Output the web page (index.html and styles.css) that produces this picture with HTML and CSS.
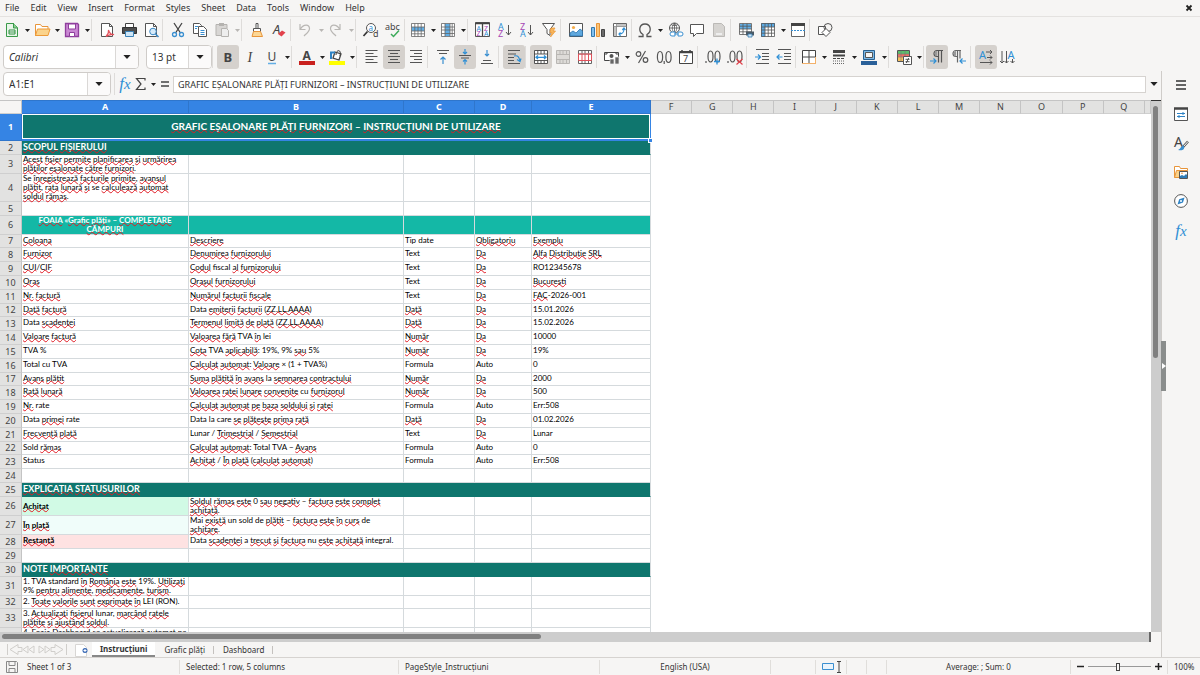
FILE: index.html
```html
<!DOCTYPE html>
<html lang="ro">
<head>
<meta charset="utf-8">
<title>Grafic eșalonare plăți furnizori</title>
<link rel="stylesheet" href="styles.css">
</head>
<body>
<svg class="defs" width="0" height="0" aria-hidden="true">
  <symbol id="caret" viewBox="0 0 8 22"><path d="M2 10h5l-2.500 3z" fill="currentColor"/></symbol>
  <symbol id="page" viewBox="0 0 22 22"><path d="M5.500 4.500h8l3 3v10h-11z" fill="#fff" stroke="#555"/><path d="M13.500 4.500v3h3" fill="none" stroke="#555"/></symbol>
</svg>

<nav class="menubar">
  <button>File</button><button>Edit</button><button>View</button><button>Insert</button><button>Format</button><button>Styles</button><button>Sheet</button><button>Data</button><button>Tools</button><button>Window</button><button>Help</button>
  <button class="close" aria-label="Close"><svg width="8" height="8" viewBox="0 0 8 8"><path d="M1.500 1.500l5 5m0-5l-5 5" stroke="#222" stroke-width="1.800"/></svg></button>
</nav>

<div class="toolbar">
  <button class="tool" aria-label="New"><svg viewBox="0 0 22 22"><path d="M5.500 4.500h7l4 4v9h-11z" fill="#e8f5e9" stroke="#3a9a49"/><path d="M12.500 4v5h4" fill="#8bcf93" stroke="#3a9a49"/><path d="M8 11h6v4H8zM8 13h6" fill="#fff" stroke="#2f9141"/></svg></button>
  <button class="drop" aria-label="New options"><svg><use href="#caret"/></svg></button>
  <button class="tool" aria-label="Open"><svg viewBox="0 0 22 22"><path d="M4.500 17V5.500h5l1.500 2h6V10" fill="#fff" stroke="#e8953a"/><path d="M4.500 16.500l2-6.500h12.500l-2 6.500z" fill="#fbd38b" stroke="#ed9a38"/></svg></button>
  <button class="drop" aria-label="Recent files"><svg><use href="#caret"/></svg></button>
  <button class="tool" aria-label="Save"><svg viewBox="0 0 22 22"><path d="M4.500 4.500h12l1 1v12h-13z" fill="#c987d3" stroke="#8f3f9d" stroke-width="1.300"/><path d="M7.500 5h7v5h-7z" fill="#fff" stroke="#8f3f9d"/><path d="M8.500 13.500h5v4h-5z" fill="#fff" stroke="#8f3f9d"/></svg></button>
  <button class="drop" aria-label="Save options"><svg><use href="#caret"/></svg></button>
  <span class="sep"></span>
  <button class="tool" aria-label="Export as PDF"><svg viewBox="0 0 22 22"><use href="#page"/><path d="M10 17.500c2-2 3-4 2.500-6.500 1 3.500 3 5 5.500 4.500-3-.5-5 .5-8 2z" fill="none" stroke="#e2525c" stroke-width="1.200"/></svg></button>
  <button class="tool" aria-label="Print"><svg viewBox="0 0 22 22"><path d="M7.500 4.500h8v4h-8z" fill="#fff" stroke="#444"/><path d="M4.500 8.500h14v6h-14z" fill="#4d4d4d" stroke="#333"/><path d="M7.500 12.500h8v5h-8z" fill="#cfe6f7" stroke="#3c83b8"/></svg></button>
  <button class="tool" aria-label="Print preview"><svg viewBox="0 0 22 22"><use href="#page"/><circle cx="13" cy="12.500" r="3.300" fill="#d7ebfa" stroke="#3a87c4"/><path d="M15.500 15l3 3" stroke="#3a87c4" stroke-width="1.600"/></svg></button>
  <span class="sep"></span>
  <button class="tool" aria-label="Cut"><svg viewBox="0 0 22 22"><path d="M7 4l6.500 10M15 4L8.500 14" stroke="#444" stroke-width="1.300"/><circle cx="7.500" cy="15.500" r="2" fill="none" stroke="#3a8fd0" stroke-width="1.300"/><circle cx="14.500" cy="15.500" r="2" fill="none" stroke="#3a8fd0" stroke-width="1.300"/></svg></button>
  <button class="tool" aria-label="Copy"><svg viewBox="0 0 22 22"><path d="M4.500 4.500h6l2 2v8h-8z" fill="#fff" stroke="#555"/><path d="M9.500 7.500h5l3 3v7h-8z" fill="#fff" stroke="#555"/><path d="M6 7.500h3M6 9.500h2M11.500 11.500h4M11.500 13.500h4M11.500 15.500h4" stroke="#3a8fd0"/></svg></button>
  <button class="tool off" aria-label="Paste"><svg viewBox="0 0 22 22"><path d="M5 5.500h11v11H5z" fill="#d8d6d4" stroke="#b5b3b0"/><path d="M8 4h5v3H8z" fill="#b5b3b0"/><path d="M10.500 9.500h5l2 2v6h-7z" fill="#eee" stroke="#b5b3b0"/></svg></button>
  <button class="drop off" aria-label="Paste options"><svg><use href="#caret"/></svg></button>
  <span class="sep"></span>
  <button class="tool" aria-label="Clone formatting"><svg viewBox="0 0 22 22"><path d="M10 4.500h2v5h-2zM7.500 9.500h7v3h-7z" fill="#fff" stroke="#555"/><path d="M7.500 12.500h7l2 5H6z" fill="#fcd795" stroke="#e8953a"/></svg></button>
  <button class="tool" aria-label="Clear formatting"><svg viewBox="0 0 22 22"><text x="5" y="15" class="glyph italic" font-size="13">A</text><path d="M10 15l4-3.500 3.500 2-4 4z" fill="#e2414b"/></svg></button>
  <span class="sep"></span>
  <button class="tool off" aria-label="Undo"><svg viewBox="0 0 22 22"><path d="M5 5v5.500h5.500M5.500 10c3-5 9-5 9-.5 0 3-3 5-5.500 7.500" fill="none" stroke="#b9b7b4" stroke-width="1.200"/></svg></button>
  <button class="drop off" aria-label="Undo steps"><svg><use href="#caret"/></svg></button>
  <button class="tool off" aria-label="Redo"><svg viewBox="0 0 22 22"><path d="M15 5v5.500H9.500M14.500 10c-3-5-9-5-9-.5 0 3 3 5 5.500 7.500" fill="none" stroke="#b9b7b4" stroke-width="1.200"/></svg></button>
  <button class="drop off" aria-label="Redo steps"><svg><use href="#caret"/></svg></button>
  <span class="sep"></span>
  <button class="tool" aria-label="Find and replace"><svg viewBox="0 0 22 22"><circle cx="11" cy="9" r="4.500" fill="#fff" stroke="#555"/><path d="M7.500 12.500L3.500 17" stroke="#333" stroke-width="1.700"/><text x="8.500" y="11.500" class="glyph blue" font-size="8">a</text><text x="13" y="18" class="glyph" font-size="9">d</text></svg></button>
  <button class="tool" aria-label="Spelling"><svg viewBox="0 0 22 22"><text x="3" y="11" class="glyph" font-size="9">abc</text><path d="M9 15l2.500 2.500 5.500-6" fill="none" stroke="#3dab5a" stroke-width="1.500"/></svg></button>
  <span class="sep tight"></span>
  <button class="tool" aria-label="Row"><svg viewBox="0 0 22 22"><path d="M4.500 4.500h13v13h-13z" fill="#fff"/><path d="M5 8h12v4H5z" fill="#62aee5"/><path d="M4.500 4.500h13v13h-13zM4.500 8h13M4.500 12h13M4.500 14.800h13M7.800 4.500v13M11 4.500v13M14.200 4.500v13" fill="none" stroke="#666" stroke-width=".8"/></svg></button>
  <button class="drop" aria-label="Row options"><svg><use href="#caret"/></svg></button>
  <button class="tool" aria-label="Column"><svg viewBox="0 0 22 22"><path d="M4.500 4.500h13v13h-13z" fill="#fff"/><path d="M8 5h5v12H8z" fill="#62aee5"/><path d="M4.500 4.500h13v13h-13zM4.500 8h13M4.500 11h13M4.500 14.500h13M8 4.500v13M13 4.500v13M15.200 4.500v13" fill="none" stroke="#666" stroke-width=".8"/></svg></button>
  <button class="drop" aria-label="Column options"><svg><use href="#caret"/></svg></button>
  <span class="sep"></span>
  <button class="tool" aria-label="Sort"><svg viewBox="0 0 22 22"><path d="M3.500 3.500h14v14h-14z" fill="#fff" stroke="#555"/><path d="M3 4.500h15M10.500 5v12" stroke="#444" stroke-width="1.300"/><text x="4.500" y="11.500" class="glyph blue" font-size="7">A</text><text x="4.500" y="17" class="glyph purple" font-size="7">Z</text><text x="12" y="11.500" class="glyph purple" font-size="7">Z</text><text x="12" y="17" class="glyph blue" font-size="7">A</text></svg></button>
  <button class="tool" aria-label="Sort ascending"><svg viewBox="0 0 22 22"><text x="4" y="10.500" class="glyph blue" font-size="9">A</text><text x="4" y="18" class="glyph purple" font-size="9">Z</text><path d="M14.500 6v10M12 13l2.500 3 2.500-3" fill="none" stroke="#555"/></svg></button>
  <button class="tool" aria-label="Sort descending"><svg viewBox="0 0 22 22"><text x="4" y="10.500" class="glyph purple" font-size="9">Z</text><text x="4" y="18" class="glyph blue" font-size="9">A</text><path d="M14.500 6v10M12 13l2.500 3 2.500-3" fill="none" stroke="#555"/></svg></button>
  <button class="tool" aria-label="AutoFilter"><svg viewBox="0 0 22 22"><path d="M4.500 4.500h12l-4.500 6v6l-3-2v-4z" fill="#fff" stroke="#555"/><path d="M13 9h4l-2 3h2.500l-5 6 1.500-4.500h-2z" fill="#f8b65c" stroke="#ed9a38" stroke-width=".8"/></svg></button>
  <span class="sep"></span>
  <button class="tool" aria-label="Image"><svg viewBox="0 0 22 22"><path d="M4.500 4.500h13v13h-13z" fill="#fff" stroke="#555"/><circle cx="8.500" cy="8.500" r="1.600" fill="#f6ad49"/><path d="M5 17v-3l3-2 3 2 4-4 2.500 2v5z" fill="#5fa8de" stroke="#2a74b0" stroke-width=".8"/></svg></button>
  <button class="tool" aria-label="Chart"><svg viewBox="0 0 22 22"><path d="M4.500 8.500h3v9h-3z" fill="#82c0ee" stroke="#3278ae"/><path d="M9.500 4.500h3v13h-3z" fill="#fbc476" stroke="#e8953a"/><path d="M14.500 10.500h3v7h-3z" fill="#6a6a6a" stroke="#444"/></svg></button>
  <button class="tool" aria-label="Pivot table"><svg viewBox="0 0 22 22"><path d="M4.500 4.500h13v13h-13z" fill="#fff" stroke="#666"/><path d="M8 5h9v2.500H8zM5 8h2.500v9H5z" fill="#c4c4c4"/><path d="M4.500 7.500h13M7.500 4.500v13" stroke="#888" stroke-width=".8"/><path d="M10 15c4 0 5-1.500 5-5.500M13.300 11L15 9l1.500 2M11.500 13.500L10 15l1.500 1.800" fill="none" stroke="#2f8fd5" stroke-width="1.200"/></svg></button>
  <span class="sep tight"></span>
  <button class="tool" aria-label="Special character"><svg viewBox="0 0 22 22"><path d="M4.500 17.500h4.500v-2c-5-3-4-10.500 2-10.500s7 7.500 2 10.500v2h4.500" fill="none" stroke="#555" stroke-width="1.300"/></svg></button>
  <button class="drop" aria-label="Recent characters"><svg><use href="#caret"/></svg></button>
  <button class="tool" aria-label="Hyperlink"><svg viewBox="0 0 22 22"><circle cx="10.500" cy="9" r="5" fill="#fff" stroke="#555"/><path d="M5.500 9h10M10.500 4v10M7 5.500c2 1.500 5 1.500 7 0M10.500 4c-3 2.500-3 7.500 0 10M10.500 4c3 2.500 3 7.500 0 10" fill="none" stroke="#555" stroke-width=".8"/><path d="M8 13h3v4H8a2 2 0 010-4zm6 0h3a2 2 0 010 4h-3zM10.500 15h4" fill="#fff" stroke="#3a8fd0"/></svg></button>
  <button class="tool" aria-label="Comment"><svg viewBox="0 0 22 22"><path d="M4.500 5.500h13v9h-7l-3 3v-3h-3z" fill="#fff" stroke="#555"/></svg></button>
  <button class="tool off" aria-label="Headers and footers"><svg viewBox="0 0 22 22"><path d="M5.500 4.500h8l3 3v10h-11z" fill="#d6d4d1" stroke="#bbb9b6"/><path d="M8 14h6v2H8z" fill="#eee"/></svg></button>
  <span class="sep"></span>
  <button class="tool" aria-label="Print area"><svg viewBox="0 0 22 22"><path d="M4.500 4.500h12v11h-12z" fill="#fff"/><path d="M5 5h11v5H5z" fill="#62aee5"/><path d="M4.500 4.500h12v11h-12zM4.500 7.200h12M4.500 10h12M4.500 12.800h12M8 4.500v11M12 4.500v11" fill="none" stroke="#555" stroke-width=".8"/><path d="M11 12.500h8v4h-8z" fill="#4b5a66"/><path d="M13 15h4v3h-4z" fill="#cde5f6" stroke="#3278ae" stroke-width=".8"/></svg></button>
  <button class="tool" aria-label="Freeze panes"><svg viewBox="0 0 22 22"><path d="M4.500 4.500h13v13h-13z" fill="#fff"/><path d="M4 4h14v4H8v10H4z" fill="#5ba9e2"/><path d="M4.500 4.500h13v13h-13zM4.500 8h13M4.500 11h13M4.500 14.200h13M8 4.500v13M11.200 4.500v13M14.500 4.500v13" fill="none" stroke="#555" stroke-width=".8"/></svg></button>
  <button class="drop" aria-label="Freeze options"><svg><use href="#caret"/></svg></button>
  <button class="tool" aria-label="Split window"><svg viewBox="0 0 22 22"><path d="M4.500 4.500h13v13h-13z" fill="#fff" stroke="#666"/><path d="M4 5.500h14" stroke="#444" stroke-width="3"/><path d="M4 11.500h14" stroke="#3a8fd0" stroke-dasharray="2 1"/></svg></button>
  <span class="sep"></span>
  <button class="tool" aria-label="Show draw functions"><svg viewBox="0 0 22 22"><path d="M4.500 7.500h7v8h-7z" fill="#fff" stroke="#555"/><circle cx="14" cy="8.500" r="4" fill="none" stroke="#555"/><path d="M12 9.500l4 4-4 4-4-4z" fill="#fff" stroke="#555"/></svg></button>
</div>

<div class="toolbar formatting">
  <div class="combo name"><input type="text" value="Calibri" aria-label="Font name"><button aria-label="Font list"><svg viewBox="0 0 9 5"><path d="M0 0h9L4.500 5z"/></svg></button></div>
  <div class="combo size"><input type="text" value="13 pt" aria-label="Font size"><button aria-label="Size list"><svg viewBox="0 0 9 5"><path d="M0 0h9L4.500 5z"/></svg></button></div>
  <span class="sep"></span>
  <button class="tool on" aria-label="Bold"><svg viewBox="0 0 22 22"><text x="6.500" y="15.500" class="glyph bold" font-size="13">B</text></svg></button>
  <button class="tool" aria-label="Italic"><svg viewBox="0 0 22 22"><text x="8.500" y="15.500" class="glyph serif" font-size="14">I</text></svg></button>
  <button class="tool" aria-label="Underline"><svg viewBox="0 0 22 22"><text x="6.500" y="14.500" class="glyph" font-size="12">U</text><path d="M7 17.500h8" stroke="#62aee5" stroke-width="1.500"/></svg></button>
  <button class="drop" aria-label="Underline styles"><svg><use href="#caret"/></svg></button>
  <span class="sep"></span>
  <button class="tool" aria-label="Font color"><svg viewBox="0 0 22 22"><text x="6.500" y="13.500" class="glyph bold" font-size="12">A</text><path d="M3 15h16v4H3z" fill="#c9211e"/></svg></button>
  <button class="drop" aria-label="Font colors"><svg><use href="#caret"/></svg></button>
  <button class="tool" aria-label="Background color"><svg viewBox="0 0 22 22"><path d="M9 6l6 2-2 6-6-2z" fill="#fff" stroke="#444" stroke-width="1.300"/><path d="M10 9c0-6 6-6 4 1" fill="none" stroke="#444"/><path d="M5 13V6.500h4" fill="none" stroke="#2f83c5" stroke-width="2"/><path d="M3 15h16v4H3z" fill="#ff0"/></svg></button>
  <button class="drop" aria-label="Background colors"><svg><use href="#caret"/></svg></button>
  <span class="sep"></span>
  <button class="tool" aria-label="Align left"><svg viewBox="0 0 22 22"><path d="M4.500 4.500h12M4.500 7.500h8M4.500 10.500h12M4.500 13.500h8M4.500 16.500h12" stroke="#555"/></svg></button>
  <button class="tool on" aria-label="Center horizontally"><svg viewBox="0 0 22 22"><path d="M5 4.500h12M7 7.500h8M5 10.500h12M7 13.500h8M5 16.500h12" stroke="#555"/></svg></button>
  <button class="tool" aria-label="Align right"><svg viewBox="0 0 22 22"><path d="M5 4.500h12M9 7.500h8M5 10.500h12M9 13.500h8M5 16.500h12" stroke="#555"/></svg></button>
  <span class="sep"></span>
  <button class="tool" aria-label="Align top"><svg viewBox="0 0 22 22"><path d="M5 4.500h12M7 7.500h8" stroke="#555"/><path d="M11 18v-7M8.500 13.500L11 11l2.500 2.500" fill="none" stroke="#3a8fd0" stroke-width="1.200"/></svg></button>
  <button class="tool on" aria-label="Center vertically"><svg viewBox="0 0 22 22"><path d="M5 9.500h12M7 12h8" stroke="#555"/><path d="M11 3v5M9 6l2 2 2-2M11 18.500v-5M9 15.500l2-2 2 2" fill="none" stroke="#2f8fd5" stroke-width="1.200"/></svg></button>
  <button class="tool" aria-label="Align bottom"><svg viewBox="0 0 22 22"><path d="M5 17.500h12M7 14.500h8" stroke="#555"/><path d="M11 4v6M9 8l2 2 2-2" fill="none" stroke="#3a8fd0" stroke-width="1.200"/></svg></button>
  <span class="sep"></span>
  <button class="tool on" aria-label="Wrap text"><svg viewBox="0 0 22 22"><path d="M5 4.500h12M5 8h8M5 11.500h6M5 14.500h6M5 17.500h12" stroke="#555"/><path d="M11 10c4-1 5 1 6 5M14 13.500l3 2 1-3" fill="none" stroke="#2f8fd5" stroke-width="1.200"/></svg></button>
  <span class="sep"></span>
  <button class="tool on" aria-label="Merge and center cells"><svg viewBox="0 0 22 22"><path d="M4.500 4.500h13v13h-13z" fill="#fff"/><path d="M4.500 4.500h13v13h-13zM4.500 8h13M4.500 14.500h13M7.800 4.500v3.500M11 4.500v3.500M14.200 4.500v3.500M7.800 14.500v3M11 14.500v3M14.200 14.500v3" fill="none" stroke="#444" stroke-width=".9"/><path d="M6 11.300h10M8 9.500L6 11.300l2 1.700M14 9.500l2 1.800-2 1.700" fill="none" stroke="#2f8fd5" stroke-width="1.300"/></svg></button>
  <button class="tool off" aria-label="Merge cells"><svg viewBox="0 0 22 22"><path d="M4.500 4.500h13v13h-13zM4.500 8.500h13M4.500 13.500h13M8 4.500v4M11 4.500v4M14.500 4.500v4M8 13.500v4M11 13.500v4M14.500 13.500v4" fill="#dddbd8" stroke="#b9b7b4"/></svg></button>
  <button class="tool" aria-label="Unmerge cells"><svg viewBox="0 0 22 22"><path d="M4.500 4.500h13v13h-13zM4.500 8h13M4.500 14.500h13M8 4.500v3M11 4.500v3M14.500 4.500v3M8 15v3M11 15v3M14.500 15v3" fill="#fff" stroke="#555" stroke-width=".9"/><path d="M4.500 8h13v6.500h-13zM8 8v6.500M11 8v6.500M14.500 8v6.500" fill="none" stroke="#e2525c"/></svg></button>
  <span class="sep"></span>
  <button class="tool" aria-label="Currency"><svg viewBox="0 0 22 22"><path d="M9 14.500H3.500v-8h14v6" fill="#fff" stroke="#444"/><circle cx="10.500" cy="10" r="2" fill="#555"/><path d="M3 8h3V6M15 6v2h3" fill="none" stroke="#444"/><path d="M9 13h4v5H9zM14 11h4v7h-4z" fill="#666" stroke="#eee" stroke-width=".7"/></svg></button>
  <button class="drop" aria-label="Currency options"><svg><use href="#caret"/></svg></button>
  <button class="tool" aria-label="Percent"><svg viewBox="0 0 22 22"><circle cx="7.500" cy="8" r="2.300" fill="none" stroke="#555" stroke-width="1.200"/><circle cx="14.500" cy="14" r="2.300" fill="none" stroke="#555" stroke-width="1.200"/><path d="M14.500 5l-7 12" stroke="#555" stroke-width="1.200"/></svg></button>
  <button class="tool" aria-label="Number"><svg viewBox="0 0 22 22"><g fill="none" stroke="#555" stroke-width="1.200"><ellipse cx="7" cy="11" rx="2.600" ry="5.500"/><ellipse cx="15.500" cy="11" rx="2.600" ry="5.500"/><path d="M11.200 15v3"/></g></svg></button>
  <button class="tool" aria-label="Date"><svg viewBox="0 0 22 22"><path d="M4.500 5.500h13v12h-13z" fill="#fff" stroke="#444"/><path d="M4 6.500h14M7 4v3M15 4v3" stroke="#444" stroke-width="1.500"/><text x="8" y="16" class="glyph" font-size="9">7</text></svg></button>
  <span class="sep"></span>
  <button class="tool" aria-label="Add decimal place"><svg viewBox="0 0 22 22"><g fill="none" stroke="#555" stroke-width="1.200"><path d="M4 15v2"/><ellipse cx="8.500" cy="10.500" rx="2.500" ry="5.500"/><ellipse cx="15.500" cy="10.500" rx="2.500" ry="5.500"/></g><path d="M12 15.500h6M15 12.500v6" stroke="#2f8fd5" stroke-width="1.300"/></svg></button>
  <button class="tool" aria-label="Delete decimal place"><svg viewBox="0 0 22 22"><g fill="none" stroke="#555" stroke-width="1.200"><path d="M4 15v2"/><ellipse cx="8.500" cy="10.500" rx="2.500" ry="5.500"/><ellipse cx="15.500" cy="10.500" rx="2.500" ry="5.500"/></g><path d="M12.500 13l6 5.500m0-5.500l-6 5.500" stroke="#e2414b" stroke-width="1.200"/></svg></button>
  <span class="sep"></span>
  <button class="tool" aria-label="Increase indent"><svg viewBox="0 0 22 22"><path d="M5 3.500h13M11 7.500h7M11 10.500h7M11 13.500h7M5 17.500h13" stroke="#555"/><path d="M4 11h5.500M7 8.500L9.500 11 7 13.500" fill="none" stroke="#2f8fd5" stroke-width="1.200"/></svg></button>
  <button class="tool" aria-label="Decrease indent"><svg viewBox="0 0 22 22"><path d="M5 3.500h13M11 7.500h7M11 10.500h7M11 13.500h7M5 17.500h13" stroke="#555"/><path d="M9.500 11H4M6.500 8.500L4 11l2.500 2.500" fill="none" stroke="#2f8fd5" stroke-width="1.200"/></svg></button>
  <span class="sep tight"></span>
  <button class="tool" aria-label="Borders"><svg viewBox="0 0 22 22"><path d="M4.500 4.500h13v13h-13zM4.500 11h13M11 4.500v13" fill="#fff" stroke="#444"/><path d="M4 17.500h14M17.500 11v7" stroke="#f3b16a"/></svg></button>
  <button class="drop" aria-label="Border options"><svg><use href="#caret"/></svg></button>
  <button class="tool" aria-label="Border style"><svg viewBox="0 0 22 22"><path d="M5 5.500h12" stroke="#444" stroke-width="3"/><path d="M5 9.500h12" stroke="#444" stroke-width="2"/><path d="M5 12.500h12" stroke="#444" stroke-dasharray="3 1"/><path d="M5 15h12M5 17.500h12" stroke="#666" stroke-dasharray="1 1"/></svg></button>
  <button class="drop" aria-label="Border style options"><svg><use href="#caret"/></svg></button>
  <button class="tool" aria-label="Border color"><svg viewBox="0 0 22 22"><path d="M5.500 4.500h11v9h-11z" fill="#7cb8e6" stroke="#286090"/><path d="M7.500 6.500h7v5h-7z" fill="#f6f5f4" stroke="#555"/><path d="M3 15h16v4H3z" fill="#2a6099"/></svg></button>
  <button class="drop" aria-label="Border colors"><svg><use href="#caret"/></svg></button>
  <span class="sep"></span>
  <button class="tool" aria-label="Conditional formatting"><svg viewBox="0 0 22 22"><path d="M4.500 4.500h12v11h-12z" fill="#fff" stroke="#555"/><path d="M5 5h11v3H5z" fill="#5cc06c"/><path d="M5 8h11v3H5z" fill="#ef7067"/><path d="M5 11h6v4H5z" fill="#f8c25d"/><path d="M4.500 8h12M4.500 11h12M8 4.500v11M12 4.500v11" stroke="#777" stroke-width=".6"/><path d="M10.500 10.500h8v8h-8z" fill="#fff" stroke="#555"/><path d="M12.500 13.300h4M12.500 15.700h4M15.800 12l-2.600 5" fill="none" stroke="#444" stroke-width=".9"/></svg></button>
  <button class="drop" aria-label="Conditional options"><svg><use href="#caret"/></svg></button>
  <span class="sep tight"></span>
  <button class="tool on" aria-label="Left-to-right"><svg viewBox="0 0 22 22"><path d="M17 4.500h-6a3 3 0 000 6h1M12.500 4.500v12M15.500 4.500v12" fill="none" stroke="#555" stroke-width="1.200"/><path d="M11 5v5a2.500 2.500 0 010-5z" fill="#999"/><path d="M4 15h6M7.500 12.500L10 15l-2.500 2.500" fill="none" stroke="#2f8fd5" stroke-width="1.200"/></svg></button>
  <button class="tool" aria-label="Right-to-left"><svg viewBox="0 0 22 22"><path d="M13 4.500H8a3 3 0 000 6h1M9.500 4.500v12M12 4.500v8" fill="none" stroke="#666" stroke-width="1.200"/><path d="M8 5v5a2.500 2.500 0 010-5z" fill="#999"/><path d="M18 15h-6M14.500 12.500L12 15l2.500 2.500" fill="none" stroke="#2f8fd5" stroke-width="1.200"/></svg></button>
  <span class="sep"></span>
  <button class="tool on" aria-label="Text left to right"><svg viewBox="0 0 22 22"><text x="4" y="13" class="glyph blue" font-size="11">A</text><path d="M11 6h6M15 4l2 2-2 2M12 11.500h5M15 9.500l2 2-2 2M5 16.500h12M15 14.500l2 2-2 2" fill="none" stroke="#555"/></svg></button>
  <button class="tool" aria-label="Text top to bottom"><svg viewBox="0 0 22 22"><text x="10.500" y="13" class="glyph blue" font-size="11">A</text><path d="M5 5v12M3 15l2 2 2-2M9.500 5v12M7.500 15l2 2 2-2M15.500 13v4M13.500 15l2 2 2-2" fill="none" stroke="#555"/></svg></button>
</div>

<div class="workspace">
  <main class="document">
    <div class="formulabar">
      <div class="combo cellref"><input type="text" value="A1:E1" aria-label="Name box"><button aria-label="Named ranges"><svg viewBox="0 0 9 5"><path d="M0 0h9L4.500 5z"/></svg></button></div>
      <span class="sep tight"></span>
      <button class="mini fx" aria-label="Function wizard">f<small>x</small></button>
      <button class="mini" aria-label="Select function"><svg width="12" height="14" viewBox="0 0 12 14"><path d="M10 3.500V1.500H1.500L6 7l-4.500 5.500H10v-2" fill="none" stroke="#444" stroke-width="1.200"/></svg></button>
      <button class="drop" aria-label="Function options"><svg><use href="#caret"/></svg></button>
      <button class="mini" aria-label="Formula"><svg width="10" height="8" viewBox="0 0 10 8"><path d="M1 2h8M1 6h8" stroke="#444" stroke-width="1.600"/></svg></button>
      <input class="formula" type="text" aria-label="Formula input" value="GRAFIC EȘALONARE PLĂȚI FURNIZORI – INSTRUCȚIUNI DE UTILIZARE">
      <button class="expand" aria-label="Expand formula bar"><svg viewBox="0 0 9 5"><path d="M0 0h9L4.500 5z"/></svg></button>
    </div>

    <div class="sheetarea">
      <div class="sheet">
        <table>
          <colgroup><col class="c-head"><col class="c-a"><col class="c-b"><col class="c-c"><col class="c-d"><col class="c-e"><col span="12"><col class="c-rest"></colgroup>
          <thead><tr><th></th><th class="sel">A</th><th class="sel">B</th><th class="sel">C</th><th class="sel">D</th><th class="sel">E</th><th>F</th><th>G</th><th>H</th><th>I</th><th>J</th><th>K</th><th>L</th><th>M</th><th>N</th><th>O</th><th>P</th><th>Q</th><th></th></tr></thead>
          <tbody>
            <tr class="title"><th class="sel">1</th><td colspan="5"><u>GRAFIC</u> <u>EȘALONARE</u> <u>PLĂȚI</u> <u>FURNIZORI</u> – <u>INSTRUCȚIUNI</u> DE <u>UTILIZARE</u><i class="handle"></i></td></tr>
            <tr class="band"><th>2</th><td colspan="5"><u>SCOPUL</u> <u>FIȘIERULUI</u></td></tr>
            <tr class="two"><th>3</th><td><u>Acest</u> <u>fișier</u> <u>permite</u> <u>planificarea</u> <u>și</u> <u>urmărirea</u><br><u>plăților</u> <u>eșalonate</u> <u>către</u> <u>furnizori</u>.</td><td></td><td></td><td></td><td></td></tr>
            <tr class="three"><th>4</th><td>Se <u>înregistrează</u> <u>facturile</u> <u>primite</u>, <u>avansul</u><br><u>plătit</u>, <u>rata</u> <u>lunară</u> <u>și</u> se <u>calculează</u> <u>automat</u><br><u>soldul</u> <u>rămas</u>.</td><td></td><td></td><td></td><td></td></tr>
            <tr><th>5</th><td></td><td></td><td></td><td></td><td></td></tr>
            <tr class="two subhead"><th>6</th><td><u>FOAIA</u> «<u>Grafic</u> <u>plăți</u>» – <u>COMPLETARE</u><br><u>CÂMPURI</u></td><td></td><td></td><td></td><td></td></tr>
            <tr><th>7</th><td><u>Coloana</u></td><td><u>Descriere</u></td><td>Tip date</td><td><u>Obligatoriu</u></td><td><u>Exemplu</u></td></tr>
            <tr><th>8</th><td><u>Furnizor</u></td><td><u>Denumirea</u> <u>furnizorului</u></td><td>Text</td><td><u>Da</u></td><td><u>Alfa</u> <u>Distribuție</u> <u>SRL</u></td></tr>
            <tr><th>9</th><td><u>CUI</u>/<u>CIF</u></td><td><u>Codul</u> fiscal <u>al</u> <u>furnizorului</u></td><td>Text</td><td><u>Da</u></td><td>RO12345678</td></tr>
            <tr><th>10</th><td><u>Oraș</u></td><td><u>Orașul</u> <u>furnizorului</u></td><td>Text</td><td><u>Da</u></td><td><u>București</u></td></tr>
            <tr><th>11</th><td><u>Nr.</u> <u>factură</u></td><td><u>Numărul</u> <u>facturii</u> <u>fiscale</u></td><td>Text</td><td><u>Da</u></td><td><u>FAC</u>-2026-001</td></tr>
            <tr><th>12</th><td><u>Dată</u> <u>factură</u></td><td>Data <u>emiterii</u> <u>facturii</u> (<u>ZZ.LL.AAAA</u>)</td><td><u>Dată</u></td><td><u>Da</u></td><td>15.01.2026</td></tr>
            <tr><th>13</th><td>Data <u>scadenței</u></td><td><u>Termenul</u> <u>limită</u> <u>de</u> <u>plată</u> (<u>ZZ.LL.AAAA</u>)</td><td><u>Dată</u></td><td><u>Da</u></td><td>15.02.2026</td></tr>
            <tr><th>14</th><td><u>Valoare</u> <u>factură</u></td><td><u>Valoarea</u> <u>fără</u> TVA <u>în</u> lei</td><td><u>Număr</u></td><td><u>Da</u></td><td>10000</td></tr>
            <tr><th>15</th><td>TVA %</td><td><u>Cota</u> TVA <u>aplicabilă</u>: 19%, 9% <u>sau</u> 5%</td><td><u>Număr</u></td><td><u>Da</u></td><td>19%</td></tr>
            <tr><th>16</th><td>Total cu TVA</td><td><u>Calculat</u> <u>automat</u>: <u>Valoare</u> × (1 + TVA%)</td><td>Formula</td><td>Auto</td><td>0</td></tr>
            <tr><th>17</th><td><u>Avans</u> <u>plătit</u></td><td><u>Suma</u> <u>plătită</u> <u>în</u> <u>avans</u> la <u>semnarea</u> <u>contractului</u></td><td><u>Număr</u></td><td><u>Da</u></td><td>2000</td></tr>
            <tr><th>18</th><td><u>Rată</u> <u>lunară</u></td><td><u>Valoarea</u> <u>ratei</u> <u>lunare</u> <u>convenite</u> cu <u>furnizorul</u></td><td><u>Număr</u></td><td><u>Da</u></td><td>500</td></tr>
            <tr><th>19</th><td><u>Nr.</u> rate</td><td><u>Calculat</u> <u>automat</u> <u>pe</u> <u>baza</u> <u>soldului</u> <u>și</u> <u>ratei</u></td><td>Formula</td><td>Auto</td><td>Err:508</td></tr>
            <tr><th>20</th><td>Data <u>primei</u> rate</td><td>Data la care <u>se</u> <u>plătește</u> <u>prima</u> <u>rată</u></td><td><u>Dată</u></td><td><u>Da</u></td><td>01.02.2026</td></tr>
            <tr><th>21</th><td><u>Frecvență</u> <u>plată</u></td><td>Lunar / <u>Trimestrial</u> / <u>Semestrial</u></td><td>Text</td><td><u>Da</u></td><td>Lunar</td></tr>
            <tr><th>22</th><td>Sold <u>rămas</u></td><td><u>Calculat</u> <u>automat</u>: Total TVA − <u>Avans</u></td><td>Formula</td><td>Auto</td><td>0</td></tr>
            <tr><th>23</th><td>Status</td><td><u>Achitat</u> / <u>În</u> <u>plată</u> (<u>calculat</u> <u>automat</u>)</td><td>Formula</td><td>Auto</td><td>Err:508</td></tr>
            <tr><th>24</th><td></td><td></td><td></td><td></td><td></td></tr>
            <tr class="band"><th>25</th><td colspan="5"><u>EXPLICAȚIA</u> <u>STATUSURILOR</u></td></tr>
            <tr class="two"><th>26</th><td class="state paid"><u>Achitat</u></td><td><u>Soldul</u> <u>rămas</u> <u>este</u> 0 <u>sau</u> <u>negativ</u> – <u>factura</u> <u>este</u> <u>complet</u><br><u>achitată</u>.</td><td></td><td></td><td></td></tr>
            <tr class="two"><th>27</th><td class="state open"><u>În</u> <u>plată</u></td><td>Mai <u>există</u> un sold de <u>plătit</u> – <u>factura</u> <u>este</u> <u>în</u> <u>curs</u> de<br><u>achitare</u>.</td><td></td><td></td><td></td></tr>
            <tr><th>28</th><td class="state late"><u>Restantă</u></td><td>Data <u>scadenței</u> a <u>trecut</u> <u>și</u> <u>factura</u> nu <u>este</u> <u>achitată</u> integral.</td><td></td><td></td><td></td></tr>
            <tr><th>29</th><td></td><td></td><td></td><td></td><td></td></tr>
            <tr class="band"><th>30</th><td colspan="5">NOTE <u>IMPORTANTE</u></td></tr>
            <tr class="two"><th>31</th><td>1. TVA standard <u>în</u> <u>România</u> <u>este</u> 19%. <u>Utilizați</u><br>9% <u>pentru</u> <u>alimente</u>, <u>medicamente</u>, <u>turism</u>.</td><td></td><td></td><td></td><td></td></tr>
            <tr><th>32</th><td>2. <u>Toate</u> <u>valorile</u> <u>sunt</u> <u>exprimate</u> <u>în</u> LEI (RON).</td><td></td><td></td><td></td><td></td></tr>
            <tr class="two"><th>33</th><td>3. <u>Actualizați</u> <u>fișierul</u> lunar, <u>marcând</u> <u>ratele</u><br><u>plătite</u> <u>și</u> <u>ajustând</u> <u>soldul</u>.</td><td></td><td></td><td></td><td></td></tr>
            <tr class="two"><th>34</th><td>4. <u>Foaia</u> <u>Dashboard</u> <u>se</u> <u>actualizează</u> <u>automat</u> <u>pe</u><br>&nbsp;</td><td></td><td></td><td></td><td></td></tr>
          </tbody>
        </table>
      </div>
      <div class="vscroll"><div class="thumb"></div></div>
    </div>
    <div class="hscroll"><div class="thumb"></div></div>
    <div class="tabs">
      <div class="tabnav"><svg width="60" height="13" viewBox="0 0 60 13"><path d="M.5 1v11M11 1.500L3 6.500l8 5v-3h4v-4h-4zM21 3v7l-5-3.500zM27 3v7l-5-3.500zM32 3v7l5-3.500zM38 3v7l5-3.500zM44 4.500h4v-3l8 5-8 5v-3h-4zM59.500 1v11" fill="none" stroke="#d0cecb"/></svg></div>
      <button class="addsheet" aria-label="Add sheet"><svg width="14" height="13" viewBox="0 0 14 13"><path d="M.5.500h8l3 3v9H.500z" fill="#fff" stroke="#d8d6d4"/><circle cx="10" cy="6.500" r="2.500" fill="#3969b5"/><path d="M8.500 6.500h3M10 5v3" stroke="#fff"/></svg></button>
      <button class="tab active">Instrucțiuni</button>
      <button class="tab">Grafic plăți</button>
      <button class="tab">Dashboard</button>
    </div>
  </main>
  <aside class="sidebar">
    <button class="collapse" aria-label="Hide sidebar"><svg width="4" height="6" viewBox="0 0 4 6"><path d="M0 0l4 3-4 3z" fill="#fff"/></svg></button>
    <button aria-label="Sidebar settings"><svg viewBox="0 0 16 16"><path d="M3 4h10M3 8h10M3 12h10" stroke="#333" stroke-width="1.600"/></svg></button>
    <button aria-label="Properties"><svg viewBox="0 0 16 16"><path d="M1.500 2.500h13v12h-13z" fill="#fff" stroke="#555"/><path d="M1 2.500h14" stroke="#444" stroke-width="2.500"/><path d="M4 7.500h8M4 10.500h8M10 6v3M6 9v3" stroke="#2f83c5"/></svg></button>
    <button aria-label="Styles"><svg viewBox="0 0 16 16"><text x="1" y="12" class="glyph" font-size="14">A</text><path d="M15 6.500L10 12" stroke="#555" stroke-width="2.600"/><path d="M15 6.500L10 12" stroke="#fff"/><path d="M11 11c-3-1-3 3-6 4 4 1 7 0 6-4z" fill="#3a8fd0"/></svg></button>
    <button aria-label="Gallery"><svg viewBox="0 0 16 16"><path d="M1.500 13.500v-11h5l1 2h7v2" fill="#fff" stroke="#e8953a"/><path d="M1.500 13.500l2-7h11v7z" fill="#fbd38b" stroke="#e8953a"/><path d="M6.500 7.500h8v7h-8z" fill="#fff" stroke="#555"/><path d="M7 14v-2l2-1 2 1 2-2 1 1v3z" fill="#2f7cb8"/><circle cx="9" cy="9.300" r=".8" fill="#e8953a"/></svg></button>
    <button aria-label="Navigator"><svg viewBox="0 0 16 16"><circle cx="8" cy="8" r="6.400" fill="#fff" stroke="#555"/><path d="M11.500 4.500l-1.500 5-5.500 2 1.700-5.200z" fill="#2f83c5"/><circle cx="8" cy="8" r="1" fill="#fff"/></svg></button>
    <button class="fx" aria-label="Functions">f<small>x</small></button>
  </aside>
</div>

<footer class="statusbar">
  <span class="disk"><svg width="12" height="12" viewBox="0 0 12 12"><path d="M.5.500h10l1 1v10H.500zM3 .5v4h6v-4M3 11.500v-4h6v4" fill="none" stroke="#888"/></svg></span>
  <span>Sheet 1 of 3</span><span>Selected: 1 row, 5 columns</span><span>PageStyle_Instrucțiuni</span><span class="mid">English (USA)</span><span></span>
  <span class="mode"><svg width="22" height="12" viewBox="0 0 22 12"><path d="M.5 2.500h11v6H.500z" fill="#eaf4fc" stroke="#3a8fd0"/><path d="M15 .5h4M17 .5v11M15 11.500h4" fill="none" stroke="#444"/></svg></span>
  <span></span><span></span><span class="mid">Average: ; Sum: 0</span>
  <span class="zoom"><button aria-label="Zoom out"><svg viewBox="0 0 7 7"><path d="M0 3.500h7" stroke="#222" stroke-width="1.500"/></svg></button><input type="range" min="0" max="100" value="48" aria-label="Zoom"><button aria-label="Zoom in"><svg viewBox="0 0 7 7"><path d="M0 3.500h7M3.500 0v7" stroke="#222" stroke-width="1.500"/></svg></button></span>
  <span class="percent">100%</span>
</footer>
</body>
</html>
```

FILE: styles.css
```css
* { box-sizing: border-box; }

body {
  margin: 0;
  height: 100vh;
  display: flex;
  flex-direction: column;
  overflow: hidden;
  background: #f6f5f4;
  color: #333;
  font: 9px/14px "Noto Sans", "Open Sans", sans-serif;
}

.defs { position: absolute; }
button { font: inherit; color: inherit; background: none; border: 0; padding: 0; margin: 0; }
input { font: inherit; color: inherit; margin: 0; }
svg { display: block; }

/* menu bar */
.menubar {
  display: flex;
  align-items: center;
  height: 17px;
  flex: none;
  gap: 11px;
  padding: 0 7px 0 5px;
  border-bottom: 1px solid #e4e2e0;
}
.close { margin-left: auto; }

/* toolbars */
.toolbar { display: flex; align-items: center; height: 26px; flex: none; padding-left: 1px; }
.formatting { height: 28px; padding-left: 3px; }
.tool { width: 22px; height: 24px; flex: none; border-radius: 3px; }
.tool svg { width: 22px; height: 22px; }
.tool.on { background: #d5d1cd; }
.drop { width: 8px; flex: none; color: #222; }
.drop svg { width: 8px; height: 22px; }
.drop.off { color: #b9b7b4; }
.sep { width: 5px; height: 22px; flex: none; border-left: 1px solid #dedcda; }
.sep.tight { width: 3px; }

.glyph { font-family: "Noto Sans", sans-serif; fill: #444; }
.glyph.blue { fill: #2f8fd5; }
.glyph.purple { fill: #a646b5; }
.glyph.bold { font-weight: 700; }
.glyph.italic { font-style: italic; }
.glyph.serif { font-family: "Liberation Serif", serif; font-style: italic; }

.combo {
  display: flex;
  height: 24px;
  border: 1px solid #cfccc9;
  border-radius: 4px;
  background: #fff;
  overflow: hidden;
}
.combo input { flex: 1; min-width: 0; border: 0; padding: 0 5px; background: none; font-size: 10px; }
.combo button { width: 23px; border-left: 1px solid #dad8d6; display: grid; place-items: center; background: #fbfafa; }
.combo svg, .expand svg { width: 8px; height: 4px; fill: #222; }
.combo.name { width: 136px; margin-right: 7px; }
.combo.name input { font-style: italic; }
.combo.size { width: 66px; }
.combo.cellref { width: 108px; margin-right: 3px; }

/* work area */
.workspace { flex: 1; display: flex; min-height: 0; }
.document { flex: 1; display: flex; flex-direction: column; min-width: 0; }

.formulabar { display: flex; align-items: center; height: 29px; flex: none; padding: 0 0 3px 3px; }
.mini { width: 16px; display: grid; place-items: center; }
.fx { color: #2f8fd5; font: italic 17px/18px "Liberation Serif", serif; }
.mini.fx { display: block; }
.fx small { font-size: 15px; }
.formula { flex: 1; min-width: 0; height: 17px; border: 1px solid #d6d3d0; background: #fff; padding: 0 4px; }
.expand { width: 15px; display: grid; place-items: center; }

.sheetarea { flex: 1; display: flex; min-height: 0; background: #fff; }
.sheet { flex: 1; overflow: hidden; min-width: 0; }

table { width: 100%; table-layout: fixed; border-collapse: separate; border-spacing: 0; }
.c-head { width: 22px; }
.c-a { width: 167px; }
.c-b { width: 215px; }
.c-c { width: 71px; }
.c-d { width: 57px; }
.c-e { width: 119px; }
.c-rest { width: 6px; }

th {
  padding: 0;
  background: #e2e2e1;
  border-right: 1px solid #c4c4c4;
  border-bottom: 1px solid #cfcfcf;
  color: #444;
  font: 9px/12px "Noto Sans", sans-serif;
}
thead th { height: 14px; border-top: 1px solid #c4c4c4; }
thead th:first-child { background: #f6f5f4; }
th.sel { background: #3584e4; color: #fff; font-weight: 700; border-color: #2f76cc; }

td {
  padding: 0 1px 2px;
  border-right: 1px solid #d5dadd;
  border-bottom: 1px solid #d5dadd;
  color: #000;
  font: 8px/9px Lato, "Noto Sans", sans-serif;
  white-space: nowrap;
  vertical-align: middle;
}
tbody tr { height: 14px; }
tbody tr:nth-child(5n+7) { height: 13px; }
tbody tr.two { height: 19px; }
tbody tr.three { height: 28px; }
tbody tr.title { height: 27px; }
.two td, .three td { padding-bottom: 0; }

/* spelling marks */
u { text-decoration: underline wavy #e01b24 1px; text-decoration-skip-ink: none; text-underline-offset: -1px; }

.title td {
  position: relative;
  background: #0f766e;
  color: #fff;
  font-size: 10px;
  line-height: 14px;
  font-weight: 700;
  text-align: center;
  border-right: 1px solid #3584e4;
  border-bottom: 2px solid #3584e4;
  box-shadow: inset 0 0 0 1px #fff;
}
.handle { position: absolute; right: -3px; bottom: -4px; width: 5px; height: 5px; background: #3584e4; border: 1px solid #fff; }
.band td { background: #0f766e; color: #fff; font-size: 9px; font-weight: 700; border-bottom-color: #0f766e; }
.subhead td { background: #14b8a6; color: #fff; font-weight: 700; text-align: center; }
.state { font-weight: 700; }
.paid { background: #d1fae5; }
.open { background: #f0fdfa; }
.late { background: #fee2e2; }

.vscroll { width: 10px; flex: none; background: #cdcdcd; padding: 5px 3px 0 2px; border-top: 1px solid #333; }
.vscroll .thumb { height: 48%; background: #808080; border-radius: 3px; }
.hscroll { height: 10px; flex: none; margin-right: 10px; background: #cdcdcd; padding: 2px 0 3px 2px; border-right: 2px solid #666; }
.hscroll .thumb { width: 47%; height: 5px; background: #808080; border-radius: 3px; }

/* sheet tabs */
.tabs { display: flex; height: 15px; flex: none; align-items: stretch; padding-left: 7px; font-size: 8px; }
.tabnav { width: 68px; padding-top: 1px; }
.addsheet { width: 17px; padding-top: 1px; }
.tab { padding: 0 9px; position: relative; }
.tab + .tab:not(.active)::after { content: ""; position: absolute; right: 0; top: 4px; height: 8px; border-right: 1px solid #c4c1be; }
.tab.active { background: #fff; font-weight: 700; padding: 0 8px; border-bottom: 2px solid #888; }

/* sidebar */
.sidebar {
  position: relative;
  width: 39px;
  flex: none;
  border-left: 1px solid #cfccc9;
  display: flex;
  flex-direction: column;
  align-items: center;
  gap: 13px;
  padding-top: 6px;
}
.sidebar button { width: 16px; height: 16px; }
.sidebar svg { width: 16px; height: 16px; overflow: visible; }
.sidebar .collapse { position: absolute; left: -1px; top: 46%; width: 5px; height: 50px; background: #8a8d8c; display: grid; place-items: center; }
.sidebar .collapse svg { width: 4px; height: 6px; }

/* status bar */
.statusbar {
  display: grid;
  grid-template-columns: 21px 159fr 219fr 201fr 171fr 45px 31px 20px 20px 184fr 97px 32px;
  height: 18px;
  flex: none;
  align-items: center;
  border-top: 1px solid #d6d3d0;
  white-space: nowrap;
  font-size: 8px;
}
.statusbar > span { height: 14px; padding-left: 6px; border-right: 1px solid #e0dedb; }
.statusbar .disk, .statusbar .percent { border: 0; }
.statusbar .disk { padding-top: 1px; }
.statusbar .mid { padding: 0; text-align: center; }
.statusbar .mode { padding-top: 1px; }
.statusbar .zoom { display: flex; align-items: center; gap: 4px; padding-right: 5px; }
.zoom button svg { width: 7px; height: 7px; }
.zoom input { appearance: none; flex: 1; min-width: 0; height: 1px; background: #999; }
.zoom input::-webkit-slider-thumb { appearance: none; width: 4px; height: 8px; background: #f6f5f4; border: 1px solid #444; }
```
